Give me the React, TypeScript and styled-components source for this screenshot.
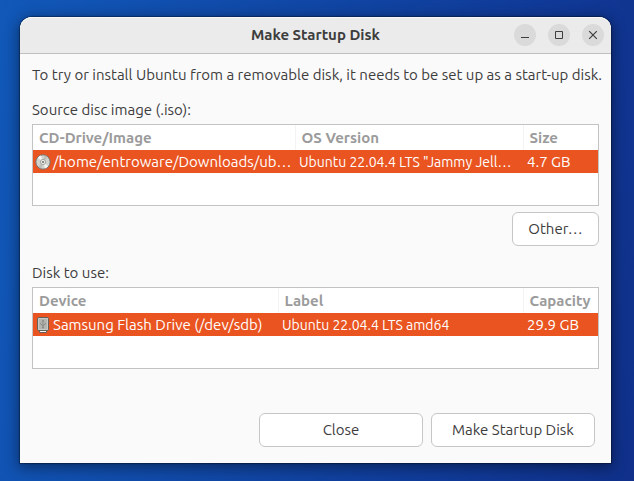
import React from "react";
import styled, { createGlobalStyle } from "styled-components";

const GlobalStyle = createGlobalStyle`
  *, *::before, *::after { box-sizing: border-box; }
  body {
    margin: 0;
    font-family: Ubuntu, "Noto Sans", "Open Sans", sans-serif;
    font-size: 15px;
    line-height: 20px;
    color: #3d3d3d;
  }
`;

const Desktop = styled.div`
  display: flex;
  min-height: 100vh;
  padding: 17px 23px 18px 20px;
  background: linear-gradient(100deg, #1158b8 0%, #103a98 75%, #10308a 100%);
`;

const Window = styled.main`
  flex: 1;
  min-width: 0;
  display: flex;
  flex-direction: column;
  background: #fafafa;
  border-radius: 12px 12px 0 0;
  box-shadow: 0 0 1px 1px rgba(0, 0, 0, 0.35), 0 3px 14px 2px rgba(0, 0, 0, 0.4);
`;

const TitleBar = styled.header`
  display: grid;
  grid-template-columns: 1fr auto 1fr;
  align-items: center;
  height: 37px;
  padding: 0 7px;
  background: #ebebeb;
  border-bottom: 1px solid #bfbfbf;
  border-radius: 12px 12px 0 0;
  box-shadow: inset 0 1px #f8f8f8;
`;

const Title = styled.h1`
  grid-column: 2;
  margin: 0;
  font-size: 15px;
  font-weight: 700;
`;

const WindowControls = styled.div`
  display: flex;
  justify-content: flex-end;
  gap: 12px;
`;

const WindowButton = styled.button`
  display: grid;
  place-items: center;
  width: 22px;
  height: 22px;
  padding: 0;
  border: 0;
  border-radius: 50%;
  background: #dadada;
  color: #3d3d3d;
`;

const Content = styled.div`
  flex: 1;
  display: flex;
  flex-direction: column;
  padding: 11px 12px 16px;
`;

const Intro = styled.p`
  margin: 0 0 15px;
  white-space: nowrap;
`;

const Section = styled.section`
  display: flex;
  flex-direction: column;
  margin-bottom: 17px;
`;

const SectionLabel = styled.h2`
  margin: 0 0 4px;
  font-size: 15px;
  font-weight: 400;
`;

const ListBox = styled.div`
  min-height: 82px;
  border: 1px solid #c3c3c3;
  background: #fff;
`;

const Table = styled.table`
  width: 100%;
  table-layout: fixed;
  border-collapse: collapse;
`;

const Column = styled.col<{ $width?: number }>`
  width: ${({ $width }) => ($width ? `${$width}px` : "auto")};
`;

const HeadCell = styled.th`
  height: 25px;
  padding: 0 6px;
  text-align: left;
  font-weight: 700;
  color: #9b9b9b;
  white-space: nowrap;
  & + & { border-left: 1px solid #f3f3f3; }
`;

const SelectedRow = styled.tr`
  background: #e95420;
  color: #fff;
`;

const Cell = styled.td<{ $compact?: boolean }>`
  height: 23px;
  padding: 0 4px;
  font-size: ${({ $compact }) => ($compact ? "14px" : "15px")};
  overflow: hidden;
  white-space: nowrap;
  text-overflow: ellipsis;
  &:first-child { padding: 0 0 0 2px; }
`;

const IconText = styled.span`
  display: flex;
  align-items: center;
  gap: 2px;
`;

const Actions = styled.div<{ $end?: boolean }>`
  display: flex;
  justify-content: flex-end;
  gap: 8px;
  margin-top: ${({ $end }) => ($end ? "auto" : "6px")};
  padding-right: ${({ $end }) => ($end ? "4px" : "0")};
`;

const Button = styled.button<{ $wide?: boolean }>`
  height: 34px;
  width: ${({ $wide }) => ($wide ? "164px" : "87px")};
  padding: 0;
  border: 1px solid #c6c6c6;
  border-radius: 6px;
  background: #fff;
  color: inherit;
  font: inherit;
`;

const DiscIcon = () => (
  <svg width="16" height="16" viewBox="0 0 16 16" aria-hidden="true">
    <circle cx="8" cy="8" r="7.2" fill="#d2d2cf" stroke="#77726c" />
    <path d="M8 8 2.8 3.8A6.7 6.7 0 0 1 6 1.6ZM8 8l5.2 4.2a6.7 6.7 0 0 1-3.2 2.2Z" fill="#f3f3f1" />
    <path d="M8 8 9.6 1.6a6.7 6.7 0 0 1 3 1.6ZM8 8l-1.6 6.4a6.7 6.7 0 0 1-3-1.6Z" fill="#bdbdb9" />
    <circle cx="8" cy="8" r="2.6" fill="#ededeb" stroke="#a3a39f" />
    <circle cx="8" cy="8" r="1" fill="#686560" />
  </svg>
);

const UsbIcon = () => (
  <svg width="16" height="16" viewBox="0 0 16 16" aria-hidden="true">
    <path d="M4.5 12h7v3.5h-7z" fill="#f4f4f2" stroke="#6b5f58" />
    <path d="M3.8.5h8.4q1.3 0 1.3 1.3v10.4q0 1.3-1.3 1.3H3.8q-1.3 0-1.3-1.3V1.8Q2.5.5 3.8.5Z" fill="#b4b4b0" stroke="#66605b" />
    <path d="M3.5 12.5v-11h9v11z" fill="none" stroke="#c8c8c4" />
    <path d="M8 4v6.5M5.7 5.8v1.4L8 8.7l2.3-1.5V5.8" fill="none" stroke="#8a8a86" />
    <path d="m6.4 4.6 1.6-2 1.6 2z" fill="#8a8a86" />
    <circle cx="8" cy="10.4" r="1" fill="#8a8a86" />
  </svg>
);

type DiskListProps = {
  label: string;
  id: string;
  firstWidth: number;
  heads: string[];
  cells: string[];
  icon: React.ReactNode;
};

const DiskList = ({ label, id, firstWidth, heads, cells, icon }: DiskListProps) => (
  <>
    <SectionLabel id={id}>{label}</SectionLabel>
    <ListBox>
      <Table aria-labelledby={id}>
        <colgroup>
          <Column $width={firstWidth} />
          <Column />
          <Column $width={75} />
        </colgroup>
        <thead>
          <tr>
            {heads.map((head) => (
              <HeadCell key={head} scope="col">{head}</HeadCell>
            ))}
          </tr>
        </thead>
        <tbody>
          <SelectedRow aria-selected="true">
            <Cell><IconText>{icon}{cells[0]}</IconText></Cell>
            <Cell $compact>{cells[1]}</Cell>
            <Cell>{cells[2]}</Cell>
          </SelectedRow>
        </tbody>
      </Table>
    </ListBox>
  </>
);

export default function App() {
  return (
    <>
      <GlobalStyle />
      <Desktop>
        <Window>
          <TitleBar>
            <Title>Make Startup Disk</Title>
            <WindowControls>
              <WindowButton aria-label="Minimize">
                <svg width="10" height="10" aria-hidden="true"><path d="M1 7.5h8" stroke="currentColor" /></svg>
              </WindowButton>
              <WindowButton aria-label="Maximize">
                <svg width="10" height="10" aria-hidden="true"><path d="M1.5 1.5h7v7h-7z" fill="none" stroke="currentColor" /></svg>
              </WindowButton>
              <WindowButton aria-label="Close window">
                <svg width="10" height="10" aria-hidden="true"><path d="m1.2 1.2 7.6 7.6m0-7.6L1.2 8.8" stroke="currentColor" strokeWidth="1.2" /></svg>
              </WindowButton>
            </WindowControls>
          </TitleBar>
          <Content>
            <Intro>To try or install Ubuntu from a removable disk, it needs to be set up as a start-up disk.</Intro>
            <Section>
              <DiskList
                id="source-label"
                label="Source disc image (.iso):"
                firstWidth={262}
                heads={["CD-Drive/Image", "OS Version", "Size"]}
                cells={["/home/entroware/Downloads/ub…", "Ubuntu 22.04.4 LTS \"Jammy Jell…", "4.7 GB"]}
                icon={<DiscIcon />}
              />
              <Actions><Button type="button">Other…</Button></Actions>
            </Section>
            <Section>
              <DiskList
                id="target-label"
                label="Disk to use:"
                firstWidth={245}
                heads={["Device", "Label", "Capacity"]}
                cells={["Samsung Flash Drive (/dev/sdb)", "Ubuntu 22.04.4 LTS amd64", "29.9 GB"]}
                icon={<UsbIcon />}
              />
            </Section>
            <Actions $end>
              <Button type="button" $wide>Close</Button>
              <Button type="button" $wide>Make Startup Disk</Button>
            </Actions>
          </Content>
        </Window>
      </Desktop>
    </>
  );
}
